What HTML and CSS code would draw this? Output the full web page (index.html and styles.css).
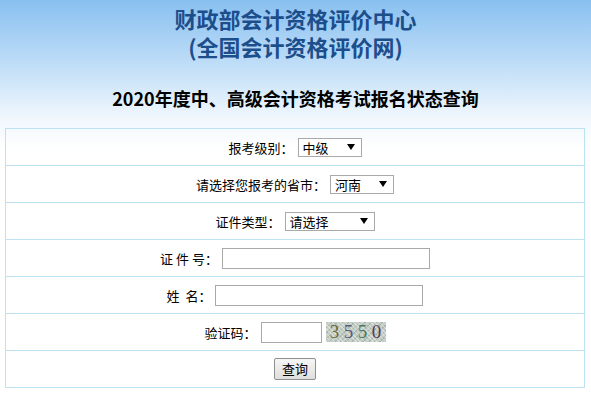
FILE: index.html
```html
<!DOCTYPE html>
<html lang="zh-CN">
<head>
<meta charset="utf-8">
<title>2020年度中、高级会计资格考试报名状态查询</title>
<link rel="stylesheet" href="styles.css">
</head>
<body>
<div class="header">
  <h1 class="title">财政部会计资格评价中心<br>(全国会计资格评价网)</h1>
  <h2 class="subtitle">2020年度中、高级会计资格考试报名状态查询</h2>
</div>
<div class="form">
  <div class="row">
    <span class="label">报考级别：</span>
    <span class="sel w64"><select><option>中级</option></select></span>
  </div>
  <div class="row">
    <span class="label">请选择您报考的省市：</span>
    <span class="sel w64"><select><option>河南</option></select></span>
  </div>
  <div class="row">
    <span class="label">证件类型：</span>
    <span class="sel w90"><select><option>请选择</option></select></span>
  </div>
  <div class="row">
    <span class="label">证&nbsp;件&nbsp;号：</span>
    <input class="txt wide" type="text">
  </div>
  <div class="row">
    <span class="label">姓&nbsp;&nbsp;名：</span>
    <input class="txt wide" type="text">
  </div>
  <div class="row">
    <span class="label">验证码：</span>
    <input class="txt short" type="text">
    <span class="captcha"><span class="d1">3</span><span class="d2">5</span><span class="d3">5</span><span class="d4">0</span></span>
  </div>
  <div class="row">
    <button class="btn" type="button">查询</button>
  </div>
</div>
</body>
</html>
```
FILE: styles.css
```css
html, body {
  margin: 0;
  padding: 0;
}
body {
  background: #ffffff linear-gradient(to bottom, #88c0f0 0px, #c4e0f8 70px, #eef6fd 115px, #ffffff 150px) no-repeat;
  background-size: 100% 150px;
  font-family: "Noto Sans CJK SC", "Noto Sans", sans-serif;
  color: #000;
  min-height: 408px;
}
.header {
  text-align: center;
  padding-top: 4px;
}
.title {
  margin: 0;
  font-size: 22px;
  line-height: 28px;
  font-weight: bold;
  color: #1d4e8c;
}
.subtitle {
  margin: 24px 0 0;
  font-size: 18px;
  line-height: 28px;
  font-weight: bold;
  color: #000;
}
.form {
  margin: 16px 0 0 5px;
  width: 578px;
  border: 1px solid #bde2f2;
}
.row {
  height: 36px;
  display: flex;
  align-items: center;
  justify-content: center;
  font-size: 13px;
}
.row + .row {
  border-top: 1px solid #bde2f2;
}
.label {
  margin-right: 4px;
  white-space: nowrap;
}
.sel {
  position: relative;
  display: inline-block;
  height: 19px;
}
.sel.w64 { width: 64px; }
.sel.w90 { width: 90px; }
.sel select {
  -webkit-appearance: none;
  appearance: none;
  width: 100%;
  height: 19px;
  margin: 0;
  padding: 0 0 0 4px;
  border: 1px solid #a9a9a9;
  border-radius: 0;
  background: #fff;
  font-family: "Noto Sans CJK SC", sans-serif;
  font-size: 13px;
  line-height: 17px;
  color: #000;
  box-sizing: border-box;
}
.sel::after {
  content: "";
  position: absolute;
  right: 7px;
  top: 6px;
  border-left: 4px solid transparent;
  border-right: 4px solid transparent;
  border-top: 6px solid #000;
  pointer-events: none;
}
.txt {
  height: 21px;
  margin: 0;
  padding: 0 2px;
  border: 1px solid #a9a9a9;
  border-radius: 0;
  box-sizing: border-box;
  background: #fff;
  font-size: 13px;
}
.txt.wide { width: 208px; }
.txt.short { width: 61px; }
.captcha {
  display: inline-flex;
  align-items: center;
  justify-content: space-around;
  width: 60px;
  height: 20px;
  margin-left: 4px;
  padding: 0 2px;
  box-sizing: border-box;
  background-color: #c3cdc5;
  background-image:
    repeating-linear-gradient(45deg, rgba(255,255,255,0.35) 0 1px, transparent 1px 3px),
    repeating-linear-gradient(-45deg, rgba(90,110,100,0.25) 0 1px, transparent 1px 4px);
  font-family: "Liberation Serif", serif;
  font-size: 19px;
  line-height: 20px;
}
.captcha .d1 { color: #6f6a3a; }
.captcha .d2 { color: #5a5e78; }
.captcha .d3 { color: #4d7a5c; }
.captcha .d4 { color: #5a3d5a; }
.btn {
  width: 42px;
  height: 22px;
  margin: 0;
  padding: 0;
  border: 1px solid #8f8f8f;
  border-radius: 2px;
  background: linear-gradient(#f6f6f6, #dedede);
  font-family: "Noto Sans CJK SC", sans-serif;
  font-size: 13px;
  line-height: 20px;
  color: #000;
}
```
